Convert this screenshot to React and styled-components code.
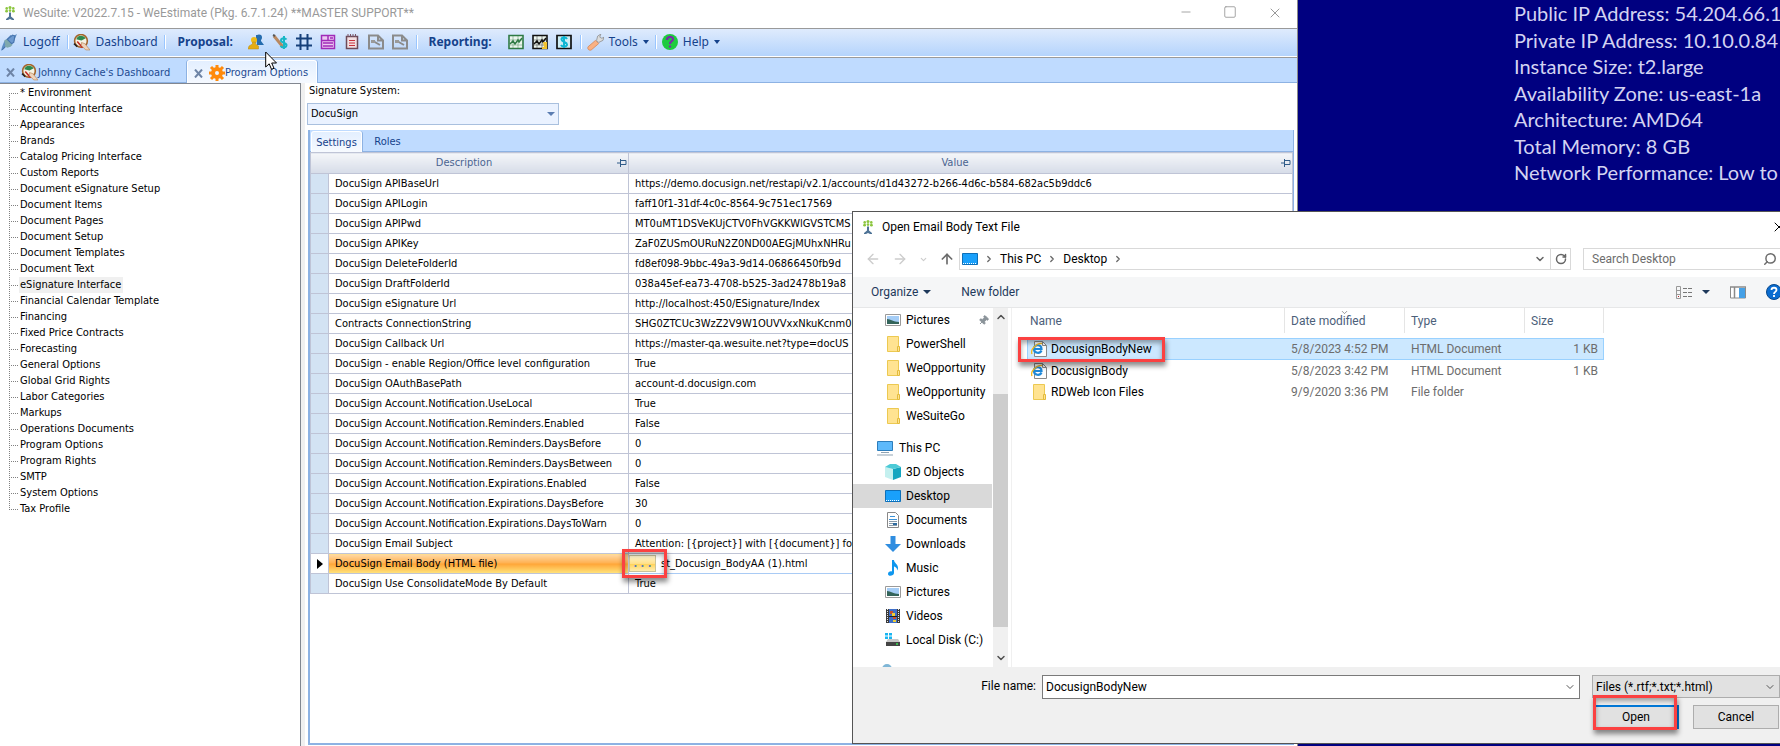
import styled, { createGlobalStyle, css } from 'styled-components'
import {
  ArrowLeft,
  ArrowRight,
  ArrowUp,
  ChevronDown,
  ChevronRight,
  ChevronUp,
  Minus,
  Pin,
  RotateCw,
  Search,
  Square,
  X,
} from 'lucide-react'

const GlobalStyle = createGlobalStyle`
  * { box-sizing: border-box; }
  body { margin: 0; background: #000080; overflow: hidden; }
  button, input, select { font: inherit; color: inherit; margin: 0; padding: 0; border: 0; border-radius: 0; background: none; }
  ul { list-style: none; margin: 0; padding: 0; }
  svg { display: block; flex: none; }
`;

const Screen = styled.div`
  position: relative;
  display: flex;
  min-height: 100vh;
  overflow: hidden;
`;

/* ---------- desktop wallpaper ---------- */

const Wallpaper = styled.aside`
  width: 482px;
  padding-left: 216px;
  background: #000080;
  color: #d3d3f2;
  font: 20px/26px Lato, "Open Sans", sans-serif;
  white-space: nowrap;
  overflow: hidden;
`;

const HostFacts = styled.div`
  display: flex;
  flex-direction: column;
  justify-content: space-between;
  height: 185px;
`;

/* ---------- application window ---------- */

const AppWindow = styled.main`
  flex: 1;
  min-width: 0;
  display: flex;
  flex-direction: column;
  background: #fff;
  border-right: 1px solid #8a8a8a;
  font: 11px/16px "DejaVu Sans Condensed", "Noto Sans", sans-serif;
  color: #000;
`;

const TitleBar = styled.header`
  height: 28px;
  display: flex;
  align-items: center;
  padding: 0 14px 3px 5px;
  gap: 8px;
  color: #999;
  font: 12px/16px Roboto, "Open Sans", sans-serif;
`;

const WindowButtons = styled.div`
  margin-left: auto;
  display: flex;
  gap: 30px;
  button { display: flex; }
`;

const Toolbar = styled.nav`
  height: 30px;
  display: flex;
  align-items: center;
  padding: 0 0 2px 1px;
  border-top: 1px solid #9a9a9a;
  border-bottom: 1px solid #9a9a9a;
  box-shadow: inset 0 -1px #fff;
  background: linear-gradient(#dfebfd, #b3d3fc);
  color: #15428b;
  font: 12px/16px "Noto Sans", sans-serif;
`;

const ToolButton = styled.button`
  display: flex;
  align-items: center;
  gap: 5px;
  min-width: 24px;
  padding-right: ${(p) => p.$after || 0}px;
`;

const ToolHeading = styled.span`
  width: ${(p) => p.$width}px;
  font-weight: 700;
`;

const Separator = styled.span`
  width: 2px;
  height: 14px;
  margin-right: ${(p) => p.$after}px;
  background: linear-gradient(90deg, #9ac6ff 50%, #fff 50%);
`;

const Caret = styled.span`
  border: ${(p) => p.$size || 3}px solid transparent;
  border-top: 4px solid ${(p) => p.$color || '#15428b'};
  border-bottom: 0;
`;

const TabStrip = styled.div`
  height: 25px;
  display: flex;
  align-items: flex-end;
  background: #bfdbff;
  border-bottom: 1px solid #8db2e3;
`;

const DocTab = styled.div`
  height: ${(p) => (p.$active ? 23 : 21)}px;
  width: ${(p) => p.$width}px;
  display: flex;
  align-items: center;
  padding: 2px 0 0 6px;
  color: #1e4a91;
  button { display: flex; align-items: center; }
  button + button { margin-left: 6px; }
  ${(p) =>
    p.$active &&
    css`
      margin-bottom: -1px;
      border: 1px solid #fff;
      border-bottom: 0;
      border-radius: 3px 3px 0 0;
      background: linear-gradient(#e3efff, #f5f9ff);
      box-shadow: 1px 0 #8db2e3, -1px 0 #8db2e3;
    `}
`;

const Workspace = styled.div`
  flex: 1;
  display: flex;
  min-height: 0;
`;

const Tree = styled.ul`
  width: 301px;
  padding: 1px 0 0 9px;
  border-top: 1px solid #828790;
  border-right: 1px solid #828790;
`;

const TreeItem = styled.li`
  display: flex;
  height: 16px;
  white-space: nowrap;
  &::before {
    content: "";
    width: 10px;
    background:
      repeating-linear-gradient(90deg, #808080 0 1px, transparent 1px 2px) 0 8px / 9px 1px no-repeat,
      repeating-linear-gradient(#808080 0 1px, transparent 1px 2px) 0 0 / 1px 100% no-repeat;
  }
  &:first-child::before { height: 8px; margin-top: 8px; background-position: 0 0, 0 0; }
  &:last-child::before { height: 9px; }
  a {
    padding: 0 2px 0 1px;
    color: #000;
    text-decoration: none;
    background: ${(p) => (p.$active ? '#f0f0f0' : 'none')};
  }
`;

const Splitter = styled.div`
  width: 4px;
  background: #f0f0f0;
`;

const Panel = styled.section`
  flex: 1;
  min-width: 0;
  display: flex;
  flex-direction: column;
  padding: 0 3px 1px 2px;
`;

const FieldLabel = styled.label`
  padding-left: 2px;
  height: 20px;
`;

const SelectBox = styled.div`
  display: flex;
  align-items: center;
  width: 252px;
  height: 22px;
  padding-right: 3px;
  background: #eaf2ff;
  border: 1px solid #a9c0de;
  select { flex: 1; height: 20px; padding-left: 3px; appearance: none; outline: 0; }
`;

const TabControl = styled.div`
  flex: 1;
  display: flex;
  flex-direction: column;
  margin: 5px 0 0 1px;
  border: 1px solid #8db2e3;
  border-width: 0 1px 2px 2px;
`;

const SubTabs = styled.div`
  height: 22px;
  display: flex;
  align-items: flex-end;
  padding-left: 1px;
  background: #bfdbff;
  border-bottom: 1px solid #8db2e3;
`;

const SubTab = styled.button`
  height: 21px;
  width: 51px;
  padding-top: 2px;
  color: #15428b;
  ${(p) =>
    p.$active &&
    css`
      margin-bottom: -1px;
      border: 1px solid #fff;
      border-bottom: 0;
      border-radius: 3px 3px 0 0;
      background: linear-gradient(#e3efff, #f7faff);
      box-shadow: 1px 0 #8db2e3;
    `}
`;

const SettingsTable = styled.table`
  width: 100%;
  table-layout: fixed;
  border-collapse: collapse;
  th, td {
    height: 20px;
    padding: 0 6px;
    border: 1px solid #bfc4d6;
    border-top: 0;
    text-align: left;
    white-space: nowrap;
    overflow: hidden;
  }
  thead th {
    height: 21px;
    border-top: 1px solid #bfc4d6;
    background: linear-gradient(#f4f6f9, #d6dce8);
    color: #4a6490;
    font-weight: 400;
    text-align: center;
    padding: 0 1px 0 0;
  }
  tbody th { font-weight: 400; }
  td:first-child { background: #d3e3f3; }
`;

const HeadCell = styled.div`
  display: flex;
  align-items: center;
  span { flex: 1; }
`;

const SettingRow = styled.tr`
  ${(p) =>
    p.$active &&
    css`
      th { background: linear-gradient(#ffd9a5, #ffb152 45%, #ffa638 50%, #ffe57e); }
      && td:first-child { background: #fff; }
      td:last-child { overflow: visible; padding: 0; border-color: #a9cbf5; }
    `}
`;

const BrowseCell = styled.div`
  position: relative;
  display: flex;
  align-items: center;
  gap: 5px;
`;

const BrowseButton = styled.button`
  width: 27px;
  height: 17px;
  line-height: 10px;
  border: 1px solid #c9c39a;
  background: linear-gradient(#fff6cf, #ffe08a 50%, #ffd35a 55%, #ffeeb0);
  color: #5b7db1;
  font-weight: 700;
`;

/* red call-out frame drawn over a control */
const Callout = styled.span`
  position: absolute;
  z-index: 2;
  top: ${(p) => p.$top}px;
  left: ${(p) => p.$left}px;
  width: ${(p) => p.$width}px;
  height: ${(p) => p.$height}px;
  border: 3px solid #fb4141;
  box-shadow: 1px 4px 5px rgba(0, 0, 0, 0.45), inset 0 3px 5px rgba(0, 0, 0, 0.35);
  pointer-events: none;
`;

const MousePointer = styled.svg`
  position: absolute;
  left: 265px;
  top: 51px;
`;

/* ---------- file dialog ---------- */

const Dialog = styled.section`
  position: absolute;
  left: 852px;
  right: 0;
  top: 211px;
  bottom: 2px;
  display: flex;
  flex-direction: column;
  border: 1px solid #555;
  border-right: 0;
  background: #fff;
  color: #000;
  font: 12px/16px Roboto, "Open Sans", sans-serif;
  overflow: hidden;
`;

const DialogTitle = styled.header`
  display: flex;
  align-items: center;
  gap: 9px;
  height: 30px;
  padding-left: 10px;
  svg:last-child { margin: 0 -7px 0 auto; }
`;

const NavRow = styled.div`
  display: flex;
  align-items: center;
  padding: 6px 0 7px 12px;
  color: #6b6b6b;
  button { display: flex; }
`;

const NavButtons = styled.div`
  display: flex;
  align-items: center;
  gap: 11px;
  width: 94px;
  button:disabled { color: #ccc; }
`;

const AddressBar = styled.div`
  flex: 1;
  display: flex;
  align-items: center;
  gap: 6px;
  height: 22px;
  padding-left: 2px;
  border: 1px solid #d9d9d9;
  color: #000;
  > svg { color: #666; }
`;

const AddressEnd = styled.div`
  margin-left: auto;
  display: flex;
  align-items: center;
  height: 20px;
  color: #666;
  button { width: 20px; height: 20px; align-items: center; justify-content: center; }
  button + button { border-left: 1px solid #d9d9d9; }
`;

const SearchBox = styled.label`
  display: flex;
  align-items: center;
  width: 197px;
  height: 22px;
  margin-left: 12px;
  padding: 0 3px 0 8px;
  border: 1px solid #d9d9d9;
  border-right: 0;
  input { flex: 1; min-width: 0; outline: 0; }
  input::placeholder { color: #6d6d6d; opacity: 1; }
  svg { transform: scaleX(-1); }
`;

const CommandBar = styled.div`
  display: flex;
  align-items: center;
  height: 31px;
  padding-left: 18px;
  background: #f5f6f7;
  border-bottom: 1px solid #e6e7e8;
  color: #1e395b;
  button { display: flex; align-items: center; gap: 5px; margin-right: 30px; }
`;

const ViewTools = styled.div`
  margin: 0 -2px 0 auto;
  display: flex;
  align-items: center;
  button { margin: 0 0 0 20px; gap: 10px; }
`;

const Browser = styled.div`
  flex: 1;
  min-height: 0;
  display: flex;
`;

const Places = styled.ul`
  width: 140px;
  overflow: hidden;
`;

const Place = styled.li`
  display: flex;
  align-items: center;
  gap: ${(p) => (p.$root ? 6 : 5)}px;
  height: 24px;
  width: 139px;
  margin-top: ${(p) => (p.$root ? 8 : 0)}px;
  padding-left: ${(p) => (p.$root ? 24 : 32)}px;
  white-space: nowrap;
  background: ${(p) => (p.$active ? '#d9d9d9' : 'none')};
  > svg:last-child { margin: 0 3px 0 auto; }
`;

const ScrollTrack = styled.div`
  width: 15px;
  display: flex;
  flex-direction: column;
  align-items: center;
  padding: 3px 0;
  background: #f0f0f0;
  color: #505050;
`;

const ScrollThumb = styled.div`
  width: 15px;
  height: 233px;
  margin: 71px 0 auto;
  background: #cdcdcd;
`;

const FileArea = styled.div`
  position: relative;
  flex: 1;
  margin-left: 3px;
  padding-left: 15px;
  border-left: 1px solid #f0f0f0;
`;

const FileTable = styled.table`
  width: 577px;
  table-layout: fixed;
  border-collapse: separate;
  border-spacing: 0;
  thead th {
    height: 25px;
    padding: 0 6px;
    border-right: 1px solid #e5e5e5;
    color: #4c607a;
    font-weight: 400;
    text-align: left;
  }
  thead th:first-child { padding-left: 3px; }
  tbody::before { content: ""; display: block; height: 5px; }
  td { height: 21px; padding: 0 6px; color: #6d6d6d; white-space: nowrap; }
  td:first-child { padding-left: 4px; color: #000; }
  td:last-child { text-align: right; }
`;

const FileRow = styled.tr`
  ${(p) =>
    p.$active &&
    css`
      td { height: 22px; background: #cce8ff; border: 1px solid #99d1ff; border-width: 1px 0; }
      td:first-child { padding-left: 3px; border-left-width: 1px; }
      td:last-child { padding-right: 5px; border-right-width: 1px; }
    `}
`;

const FileName = styled.span`
  display: flex;
  align-items: center;
  gap: 4px;
`;

const SortHead = styled.th`
  position: relative;
  svg { position: absolute; top: 0; left: 55px; color: #777; }
`;

const Footer = styled.footer`
  display: grid;
  grid-template-columns: 183px 1fr 188px;
  align-content: start;
  column-gap: 6px;
  row-gap: 6px;
  height: 76px;
  padding-top: 8px;
  background: #f0f0f0;
  > label { text-align: right; line-height: 23px; }
`;

const NameBox = styled.div`
  display: flex;
  align-items: center;
  height: 24px;
  margin-right: 6px;
  padding: 0 3px;
  border: 1px solid #7a7a7a;
  background: #fff;
  color: #000;
  input { flex: 1; min-width: 0; outline: 0; }
`;

const TypeBox = styled.div`
  display: flex;
  align-items: center;
  height: 23px;
  padding: 0 3px;
  border: 1px solid #adadad;
  background: #e1e1e1;
  select { flex: 1; min-width: 0; appearance: none; outline: 0; }
`;

const Actions = styled.div`
  position: relative;
  grid-column: 3;
  display: flex;
  justify-content: space-between;
  padding: 0 1px;
`;

const ActionButton = styled.button`
  width: 86px;
  height: 24px;
  border: ${(p) => (p.$primary ? '2px solid #0078d7' : '1px solid #adadad')};
  background: #e1e1e1;
`;

/* ---------- drawings ---------- */

const Icon = ({ size = 16, children, ...rest }) => (
  <svg width={size} height={size} viewBox="0 0 16 16" fill="none" aria-hidden="true" {...rest}>
    {children}
  </svg>
)

const WeSuiteIcon = () => (
  <svg width="10" height="14" viewBox="0 0 10 14" aria-hidden="true">
    <g fill="#8cc63f">
      <circle cx="5" cy="1.5" r="1.5" />
      <circle cx="1.7" cy="2.4" r="1.3" />
      <circle cx="8.3" cy="2.4" r="1.3" />
      <circle cx="1.6" cy="5.2" r="1.4" />
      <circle cx="8.4" cy="5.2" r="1.4" />
      <circle cx="5" cy="4.6" r="1.3" />
    </g>
    <path d="M4 6.5h2v4l3 2.500v1H7l-2-1-2 1H1v-1l3-2.500z" fill="#4e7396" />
  </svg>
)

const PlugIcon = () => (
  <Icon size={17}>
    <path d="M9 1l2 1 4-2-2 5-1 3-4 3-4 1-4 4 1-4 2-5z" fill="#5f8fc4" />
    <path d="M3 6l2-1 6 5-2 2-3 1-2-1-1 1 1-3z" fill="#7fa9ad" />
    <path d="M6 5l5-4 2 1-1 6-2 1zM1 15l3-3" fill="#6d9ad0" stroke="#4673ad" />
  </Icon>
)

const GaugeIcon = () => (
  <Icon size={17}>
    <circle cx="7.500" cy="6.500" r="6" fill="#f6f3e4" stroke="#a3642b" strokeWidth="1.500" />
    <path d="M3 5a5 5 0 0 1 9-1L8 6z" fill="#2f8a50" />
    <path d="M4 7l5 6" stroke="#c22b22" strokeWidth="1.500" />
    <path d="M8 8l3 1 5 6h-4L8 11z" fill="#efd3bb" stroke="#b78555" strokeWidth=".6" />
    <path d="M1 9l3 3" stroke="#222" strokeWidth="1.500" />
  </Icon>
)

const PeopleIcon = () => (
  <Icon>
    <path d="M8 1h5v6l3 4H9z" fill="#256cae" />
    <circle cx="11" cy="3.500" r="3" fill="#256cae" />
    <circle cx="6" cy="6" r="3" fill="#eebb19" />
    <path d="M4.500 8h3v2l3 2v3H0l1-3 3.500-2z" fill="#e4ac12" stroke="#b78a12" strokeWidth=".5" />
  </Icon>
)

const PriceIcon = () => (
  <Icon>
    <path d="M2 2l9 11" stroke="#b98860" strokeWidth="3" />
    <path d="M1 1l2 1" stroke="#555" strokeWidth="2" />
    <path d="M14.500 5.500C13 3.500 9 4 9 6.500s5.500 2 5.500 4.500-4 3.500-6 1M12 2v13" stroke="#18b7c6" strokeWidth="2" />
  </Icon>
)

const HashIcon = () => (
  <Icon>
    <path d="M4.500 0v16M11.500 0v16M0 4.500h16M0 11.500h16" stroke="#16407a" strokeWidth="2" />
  </Icon>
)

const FormIcon = () => (
  <Icon>
    <path d="M1.500 1.500h13v13h-13z" fill="#ecc9f3" />
    <path d="M1.500 1.500h13v13h-13zM1.500 6.500h13M8 2v4M3 9h10M3 12h10M10 4h3" stroke="#a02bb8" strokeWidth="1.500" />
  </Icon>
)

const NotepadIcon = () => (
  <Icon>
    <path d="M2.500 2.500h11v12h-11z" fill="#f3dfe2" stroke="#6d4a58" strokeWidth="1.500" />
    <path d="M4 0v3M6.500 0v3M9 0v3M11.500 0v3" stroke="#7a5566" />
    <path d="M5 6.500h6M5 9h6M5 11.500h6" stroke="#c8333d" />
  </Icon>
)

const PageIcon = () => (
  <Icon>
    <path d="M1 1.500h9l5 5v8H1zM10 1.500v5h5M5 7l7 4" stroke="#8b8b8b" strokeWidth="2" />
    <path d="M3 6h4v3H3z" fill="#9a9a9a" />
  </Icon>
)

const ChartIcon = ({ color, accent }) => (
  <Icon>
    <path d="M1 1.500h14v13H1z" fill="#edf6ef" stroke={color} strokeWidth="1.600" />
    <path d="M5 2v12M10 2v12M2 6h12M2 11h12" stroke={color} strokeWidth=".4" />
    <path d="M2 10l3-3 2 3 3-4 1 2 3-4" stroke={color} strokeWidth="1.500" />
    {accent && <path d="M11 8h4v7h-5v-2h2z" fill="#f2c230" />}
  </Icon>
)

const DollarBoxIcon = () => (
  <Icon>
    <path d="M1 1.500h14v13H1z" fill="#cfeef5" stroke="#111" strokeWidth="1.700" />
    <path d="M11 5C10 3 5.500 3 5.500 5.500S11 8 11 10.500 6 13 5 11M8 2v12" stroke="#0fb6d3" strokeWidth="2" />
  </Icon>
)

const WrenchIcon = () => (
  <Icon size={17}>
    <path d="M9 6l1-4 3-2-1 3 2 1 2-1-1 3-4 2z" fill="#dcdcdc" stroke="#888" strokeWidth=".7" />
    <path d="M8 6l3 3-7 6c-2 1-4-1-3-3z" fill="#f9b184" stroke="#d4824e" strokeWidth=".7" />
  </Icon>
)

const HelpIcon = () => (
  <Icon>
    <circle cx="8" cy="8" r="8" fill="#1ecb3e" />
    <path d="M5 6c0-4 6-4 6-1 0 2.500-3 2-3 5M8 11.500v2" stroke="#7a2ca8" strokeWidth="2.200" />
  </Icon>
)

const GearIcon = () => (
  <Icon>
    <circle cx="8" cy="8" r="4" stroke="#ff8a0c" strokeWidth="4" />
    <path d="M8 0v3M8 13v3M0 8h3M13 8h3M2 2l2.500 2.500M11.500 11.500L14 14M14 2l-2.500 2.500M4.500 11.500L2 14" stroke="#ff8a0c" strokeWidth="3" />
  </Icon>
)

const PushPin = () => (
  <svg width="10" height="8" viewBox="0 0 10 8" fill="none" aria-hidden="true">
    <path d="M0 4h3M3.500 0v8M4 1.500h5v4H4M4 5.500h5" stroke="#2f5b88" />
  </svg>
)

const CloseMark = () => (
  <svg width="9" height="9" viewBox="0 0 9 9" fill="none" aria-hidden="true">
    <path d="M1 0.500L8 8.500M8 0.500L1 8.500" stroke="#6e84a6" strokeWidth="2" />
  </svg>
)

const FolderIcon = () => (
  <Icon>
    <path d="M2.500.5h11v15h-11z" fill="#ffe391" stroke="#ecc951" />
    <path d="M12.500 10.500h2v5h-2z" fill="#ffe391" stroke="#e3bb3c" />
  </Icon>
)

const HtmlFileIcon = () => (
  <Icon>
    <path d="M3.500.5h8l4 4v11h-12z" fill="#fdfdfd" stroke="#888" />
    <path d="M11.500.5v4h4" stroke="#888" />
    <path d="M3 8h7.500c0-5-7.500-5-7.500 0 0 4.500 6 5 7.500 1.500" stroke="#1e88d8" strokeWidth="2.200" />
    <path d="M1 13C-1 9 5 2 11 2.500" stroke="#f0b821" strokeWidth="1.300" />
  </Icon>
)

const PictureIcon = () => (
  <Icon>
    <path d="M.5 2.500h15v11H.5z" fill="#fff" stroke="#9a9a9a" />
    <path d="M2 4h12v8H2z" fill="#a5cdf6" />
    <path d="M2 7c4 0 6 3 12 3v2H2z" fill="#33645a" />
  </Icon>
)

const DesktopIcon = () => (
  <Icon>
    <path d="M.5 2.500h15v11H.5z" fill="#19a0fb" stroke="#0d6fb8" />
    <path d="M1 12.500h11M13 12.500h1" stroke="#fff" strokeDasharray="1 1" />
  </Icon>
)

const ComputerIcon = () => (
  <Icon>
    <path d="M.5 1.500h15v9H.5z" fill="#5db9fb" stroke="#2d7dbb" />
    <path d="M4 12.500h8M0 15h16" stroke="#8fa3b3" />
  </Icon>
)

const CubeIcon = () => (
  <Icon>
    <path d="M0 3l8 2v11l-8-3z" fill="#c4f0ef" />
    <path d="M16 3L8 5v11l8-3z" fill="#14a6c0" />
    <path d="M0 3l5-3h6l5 3-8 2z" fill="#4ccad6" />
  </Icon>
)

const DocumentIcon = () => (
  <Icon>
    <path d="M2.500.5h8l3 3v12h-11z" fill="#fff" stroke="#888" />
    <path d="M5 4.500h5M4 7.500h8" stroke="#3c93d8" />
    <path d="M4 9.500h8M4 11.500h4M4 13.500h8" stroke="#8a9aa8" />
    <path d="M8 11h4v2H8z" fill="#2d6ba0" />
  </Icon>
)

const DownloadIcon = () => (
  <Icon>
    <path d="M5.500 0h5v8H16l-8 8-8-8h5.500z" fill="#2f8de0" />
  </Icon>
)

const MusicIcon = () => (
  <Icon>
    <path d="M7 0h2c0 3 4 4 4 8 0 1-.5 2-1 2.500C12.500 7.500 10 7 9 6.500V13c0 3-6 4-6 1 0-2 2-3 4-2.500z" fill="#0f97ee" />
  </Icon>
)

const VideoIcon = () => (
  <Icon>
    <path d="M1 1h14v14H1z" fill="#3a3a3a" />
    <path d="M4 1h8v14H4z" fill="#3f6fc8" />
    <path d="M5 3h3v3H5zM8 9h3v2H8z" fill="#c8502c" />
    <path d="M7 5h3v3H7zM8 12h3v2H8z" fill="#f0cf35" />
    <path d="M2.500 1v14M13.500 1v14" stroke="#e8e8e8" strokeDasharray="1 1" />
    <path d="M4 8.500h8" stroke="#222" />
  </Icon>
)

const DiskIcon = () => (
  <Icon>
    <path d="M0 1h3v2.500H0zM4 1h3v2.500H4zM0 4.500h3V7H0zM4 4.500h3V7H4z" fill="#19b5f1" />
    <path d="M3 7h10l2 3H1z" fill="#c8c8c8" />
    <path d="M1 10h14v4H1z" fill="#444" />
    <path d="M11 12h2" stroke="#37e052" strokeWidth="1.500" />
  </Icon>
)

const NetworkIcon = () => (
  <Icon>
    <path d="M5 5a5 5 0 0 1 10 0v6H5z" fill="#7fb6d6" />
  </Icon>
)

const ViewListIcon = () => (
  <Icon>
    <path d="M.5 2.500h4v12h-4zM.5 6.500h4M.5 10.500h4" stroke="#999" />
    <path d="M7 4.500h9M7 8.500h9M7 12.500h9" stroke="#777" strokeDasharray="4 1" />
    <path d="M2 12.500h1" stroke="#b22" />
  </Icon>
)

const PreviewIcon = () => (
  <Icon>
    <path d="M.5 3v11h15V3" fill="#fff" stroke="#8a8a8a" />
    <path d="M0 3h16M4.500 3v11" stroke="#8a8a8a" strokeWidth="1.500" />
    <path d="M9 4h6v10H9z" fill="#45a0e6" />
  </Icon>
)

const QuestionIcon = () => (
  <Icon>
    <circle cx="8" cy="8" r="7.500" fill="#0a6cd0" stroke="#08488c" />
    <path d="M5.500 6c0-3 5-3 5 0 0 2-2.500 1.800-2.500 4M8 11v2" stroke="#fff" strokeWidth="1.800" />
  </Icon>
)

/* ---------- data ---------- */

const hostFacts = [
  'Public IP Address: 54.204.66.1',
  'Private IP Address: 10.10.0.84',
  'Instance Size: t2.large',
  'Availability Zone: us-east-1a',
  'Architecture: AMD64',
  'Total Memory: 8 GB',
  'Network Performance: Low to',
]

const sections = [
  '* Environment', 'Accounting Interface', 'Appearances', 'Brands', 'Catalog Pricing Interface',
  'Custom Reports', 'Document eSignature Setup', 'Document Items', 'Document Pages', 'Document Setup',
  'Document Templates', 'Document Text', 'eSignature Interface', 'Financial Calendar Template', 'Financing',
  'Fixed Price Contracts', 'Forecasting', 'General Options', 'Global Grid Rights', 'Labor Categories',
  'Markups', 'Operations Documents', 'Program Options', 'Program Rights', 'SMTP', 'System Options', 'Tax Profile',
]

const settings = [
  ['DocuSign APIBaseUrl', 'https://demo.docusign.net/restapi/v2.1/accounts/d1d43272-b266-4d6c-b584-682ac5b9ddc6'],
  ['DocuSign APILogin', 'faff10f1-31df-4c0c-8564-9c751ec17569'],
  ['DocuSign APIPwd', 'MT0uMT1DSVeKUjCTV0FhVGKKWlGVSTCMS'],
  ['DocuSign APIKey', 'ZaF0ZUSmOURuN2Z0ND00AEGjMUhxNHRu'],
  ['DocuSign DeleteFolderId', 'fd8ef098-9bbc-49a3-9d14-06866450fb9d'],
  ['DocuSign DraftFolderId', '038a45ef-ea73-4708-b525-3ad2478b19a8'],
  ['DocuSign eSignature Url', 'http://localhost:450/ESignature/Index'],
  ['Contracts ConnectionString', 'SHG0ZTCUc3WzZ2V9W1OUVVxxNkuKcnm0b'],
  ['DocuSign Callback Url', 'https://master-qa.wesuite.net?type=docUS'],
  ['DocuSign - enable Region/Office level configuration', 'True'],
  ['DocuSign OAuthBasePath', 'account-d.docusign.com'],
  ['DocuSign Account.Notification.UseLocal', 'True'],
  ['DocuSign Account.Notification.Reminders.Enabled', 'False'],
  ['DocuSign Account.Notification.Reminders.DaysBefore', '0'],
  ['DocuSign Account.Notification.Reminders.DaysBetween', '0'],
  ['DocuSign Account.Notification.Expirations.Enabled', 'False'],
  ['DocuSign Account.Notification.Expirations.DaysBefore', '30'],
  ['DocuSign Account.Notification.Expirations.DaysToWarn', '0'],
  ['DocuSign Email Subject', 'Attention: [{project}] with [{document}] fo'],
  ['DocuSign Email Body (HTML file)', 'st_Docusign_BodyAA (1).html'],
  ['DocuSign Use ConsolidateMode By Default', 'True'],
]

const places = [
  { name: 'Pictures', icon: PictureIcon, pinned: true },
  { name: 'PowerShell', icon: FolderIcon },
  { name: 'WeOpportunity', icon: FolderIcon },
  { name: 'WeOpportunity', icon: FolderIcon },
  { name: 'WeSuiteGo', icon: FolderIcon },
  { name: 'This PC', icon: ComputerIcon, root: true },
  { name: '3D Objects', icon: CubeIcon },
  { name: 'Desktop', icon: DesktopIcon, active: true },
  { name: 'Documents', icon: DocumentIcon },
  { name: 'Downloads', icon: DownloadIcon },
  { name: 'Music', icon: MusicIcon },
  { name: 'Pictures', icon: PictureIcon },
  { name: 'Videos', icon: VideoIcon },
  { name: 'Local Disk (C:)', icon: DiskIcon },
  { name: '', icon: NetworkIcon, root: true },
]

const files = [
  { name: 'DocusignBodyNew', icon: HtmlFileIcon, date: '5/8/2023 4:52 PM', type: 'HTML Document', size: '1 KB', active: true },
  { name: 'DocusignBody', icon: HtmlFileIcon, date: '5/8/2023 3:42 PM', type: 'HTML Document', size: '1 KB' },
  { name: 'RDWeb Icon Files', icon: FolderIcon, date: '9/9/2020 3:36 PM', type: 'File folder', size: '' },
]

/* ---------- parts ---------- */

const MainToolbar = () => (
  <Toolbar>
    <ToolButton $after={8}><PlugIcon />Logoff</ToolButton>
    <Separator $after={4} />
    <ToolButton $after={6}><GaugeIcon />Dashboard</ToolButton>
    <Separator $after={12} />
    <ToolHeading $width={70}>Proposal:</ToolHeading>
    <ToolButton aria-label="Contacts"><PeopleIcon /></ToolButton>
    <ToolButton aria-label="Pricing"><PriceIcon /></ToolButton>
    <ToolButton aria-label="Grid"><HashIcon /></ToolButton>
    <ToolButton aria-label="Form"><FormIcon /></ToolButton>
    <ToolButton aria-label="Notes"><NotepadIcon /></ToolButton>
    <ToolButton aria-label="Document"><PageIcon /></ToolButton>
    <ToolButton aria-label="Attachment"><PageIcon /></ToolButton>
    <Separator $after={11} />
    <ToolHeading $width={79}>Reporting:</ToolHeading>
    <ToolButton aria-label="Report"><ChartIcon color="#2f7a45" /></ToolButton>
    <ToolButton aria-label="Sales report"><ChartIcon color="#111" accent /></ToolButton>
    <ToolButton aria-label="Revenue report"><DollarBoxIcon /></ToolButton>
    <Separator $after={5} />
    <ToolButton $after={6}><WrenchIcon />Tools<Caret /></ToolButton>
    <Separator $after={5} />
    <ToolButton><HelpIcon />Help<Caret /></ToolButton>
  </Toolbar>
)

const SettingsGrid = () => (
  <SettingsTable>
    <colgroup>
      <col style={{ width: 18 }} />
      <col style={{ width: 300 }} />
      <col />
    </colgroup>
    <thead>
      <tr>
        <th colSpan={2}><HeadCell><span>Description</span><PushPin /></HeadCell></th>
        <th><HeadCell><span>Value</span><PushPin /></HeadCell></th>
      </tr>
    </thead>
    <tbody>
      {settings.map(([name, value]) => {
        const active = name.startsWith('DocuSign Email Body')
        return (
          <SettingRow key={name} $active={active}>
            <td>
              {active && (
                <svg width="6" height="10" viewBox="0 0 6 10" aria-hidden="true"><path d="M0 0l6 5-6 5z" /></svg>
              )}
            </td>
            <th scope="row">{name}</th>
            <td>
              {active ? (
                <BrowseCell>
                  <BrowseButton>. . .</BrowseButton>
                  {value}
                  <Callout $left={-7} $top={-6} $width={45} $height={29} />
                </BrowseCell>
              ) : value}
            </td>
          </SettingRow>
        )
      })}
    </tbody>
  </SettingsTable>
)

const FileDialog = () => (
  <Dialog role="dialog" aria-label="Open Email Body Text File">
    <DialogTitle>
      <WeSuiteIcon />
      Open Email Body Text File
      <X size={16} strokeWidth={1.500} />
    </DialogTitle>
    <NavRow>
      <NavButtons>
        <button disabled aria-label="Back"><ArrowLeft size={16} /></button>
        <button disabled aria-label="Forward"><ArrowRight size={16} /></button>
        <button disabled aria-label="Recent"><ChevronDown size={9} strokeWidth={3} /></button>
        <button aria-label="Up"><ArrowUp size={16} strokeWidth={2.500} /></button>
      </NavButtons>
      <AddressBar>
        <DesktopIcon />
        <ChevronRight size={10} strokeWidth={3} />
        <button>This PC</button>
        <ChevronRight size={10} strokeWidth={3} />
        <button>Desktop</button>
        <ChevronRight size={10} strokeWidth={3} />
        <AddressEnd>
          <button aria-label="Previous locations"><ChevronDown size={12} strokeWidth={3} /></button>
          <button aria-label="Refresh"><RotateCw size={12} strokeWidth={3} /></button>
        </AddressEnd>
      </AddressBar>
      <SearchBox>
        <input aria-label="Search Desktop" placeholder="Search Desktop" />
        <Search size={14} strokeWidth={2.500} />
      </SearchBox>
    </NavRow>
    <CommandBar>
      <button>Organize <Caret $size={4} $color="#1e395b" /></button>
      <button>New folder</button>
      <ViewTools>
        <button aria-label="View"><ViewListIcon /><Caret $size={4} $color="#1e395b" /></button>
        <button aria-label="Preview pane"><PreviewIcon /></button>
        <button aria-label="Help"><QuestionIcon /></button>
      </ViewTools>
    </CommandBar>
    <Browser>
      <Places>
        {places.map(({ name, icon: PlaceIcon, root, active, pinned }, i) => (
          <Place key={i} $root={root} $active={active}>
            <PlaceIcon />
            <span>{name}</span>
            {pinned && <Pin size={11} color="#8a9399" fill="#8a9399" style={{ rotate: '45deg' }} />}
          </Place>
        ))}
      </Places>
      <ScrollTrack>
        <ChevronUp size={12} strokeWidth={3} />
        <ScrollThumb />
        <ChevronDown size={12} strokeWidth={3} />
      </ScrollTrack>
      <FileArea>
        <FileTable>
          <colgroup>
            <col style={{ width: 258 }} />
            <col style={{ width: 120 }} />
            <col style={{ width: 120 }} />
            <col />
          </colgroup>
          <thead>
            <tr>
              <th>Name</th>
              <SortHead><ChevronDown size={9} />Date modified</SortHead>
              <th>Type</th>
              <th>Size</th>
            </tr>
          </thead>
          <tbody>
            {files.map(({ name, icon: FileIcon, date, type, size, active }) => (
              <FileRow key={name} $active={active}>
                <td><FileName><FileIcon />{name}</FileName></td>
                <td>{date}</td>
                <td>{type}</td>
                <td>{size}</td>
              </FileRow>
            ))}
          </tbody>
        </FileTable>
        <Callout $left={6} $top={29} $width={147} $height={25} />
      </FileArea>
    </Browser>
    <Footer>
      <label htmlFor="file-name">File name:</label>
      <NameBox>
        <input id="file-name" defaultValue="DocusignBodyNew" />
        <ChevronDown size={12} color="#555" />
      </NameBox>
      <TypeBox>
        <select aria-label="File type"><option>Files (*.rtf;*.txt;*.html)</option></select>
        <ChevronDown size={12} color="#555" />
      </TypeBox>
      <Actions>
        <ActionButton $primary>Open</ActionButton>
        <ActionButton>Cancel</ActionButton>
        <Callout $left={1} $top={-10} $width={84} $height={35} />
      </Actions>
    </Footer>
  </Dialog>
)

const App = () => {
  return (
    <Screen>
      <GlobalStyle />
      <AppWindow>
        <TitleBar>
          <WeSuiteIcon />
          WeSuite: V2022.7.15 - WeEstimate (Pkg. 6.7.1.24) **MASTER SUPPORT**
          <WindowButtons>
            <button aria-label="Minimize"><Minus size={14} strokeWidth={1.500} /></button>
            <button aria-label="Maximize"><Square size={14} strokeWidth={1.500} /></button>
            <button aria-label="Close"><X size={16} strokeWidth={1.500} /></button>
          </WindowButtons>
        </TitleBar>
        <MainToolbar />
        <TabStrip>
          <DocTab $width={187}>
            <button aria-label="Close tab"><CloseMark /></button>
            <button><GaugeIcon />Johnny Cache's Dashboard</button>
          </DocTab>
          <DocTab $width={130} $active>
            <button aria-label="Close tab"><CloseMark /></button>
            <button><GearIcon />Program Options</button>
          </DocTab>
        </TabStrip>
        <Workspace>
          <Tree>
            {sections.map((name) => (
              <TreeItem key={name} $active={name === 'eSignature Interface'}>
                <a href="#">{name}</a>
              </TreeItem>
            ))}
          </Tree>
          <Splitter />
          <Panel>
            <FieldLabel htmlFor="signature-system">Signature System:</FieldLabel>
            <SelectBox>
              <select id="signature-system"><option>DocuSign</option></select>
              <Caret $size={4} $color="#5b7db1" />
            </SelectBox>
            <TabControl>
              <SubTabs>
                <SubTab $active>Settings</SubTab>
                <SubTab>Roles</SubTab>
              </SubTabs>
              <SettingsGrid />
            </TabControl>
          </Panel>
        </Workspace>
      </AppWindow>
      <Wallpaper>
        <HostFacts>
          {hostFacts.map((fact) => <span key={fact}>{fact}</span>)}
        </HostFacts>
      </Wallpaper>
      <FileDialog />
      <MousePointer width="13" height="20" viewBox="0 0 13 20" aria-hidden="true">
        <path d="M.7 1v15l3.500-3.200 2.300 5.500 2.500-1-2.300-5.300h4.800z" fill="#fff" stroke="#000" />
      </MousePointer>
    </Screen>
  )
}
export default App
